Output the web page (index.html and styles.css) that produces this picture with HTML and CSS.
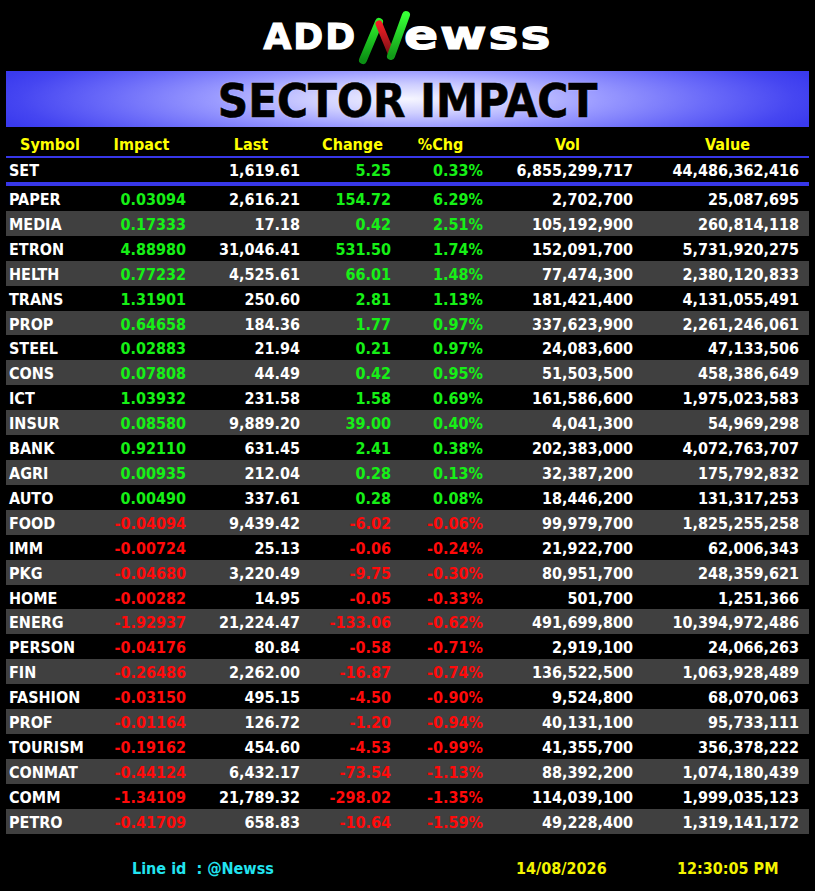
FILE: index.html
```html
<!DOCTYPE html>
<html lang="en">
<head>
<meta charset="utf-8">
<title>Sector Impact</title>
<link rel="stylesheet" href="styles.css">
</head>
<body>
<div class="page">
  <header class="logo">
    <span class="logo-add">ADD</span>
    <svg class="logo-mark" width="48" height="56" viewBox="0 0 48 56" aria-hidden="true">
      <defs>
        <linearGradient id="gL" x1="0" y1="1" x2="0" y2="0">
          <stop offset="0" stop-color="#0b8f14"/>
          <stop offset="1" stop-color="#2cf02c"/>
        </linearGradient>
        <linearGradient id="gR" x1="0" y1="1" x2="0" y2="0">
          <stop offset="0" stop-color="#129a18"/>
          <stop offset="1" stop-color="#36ff36"/>
        </linearGradient>
        <linearGradient id="rd" x1="0" y1="0" x2="0" y2="1">
          <stop offset="0" stop-color="#f21e24"/>
          <stop offset="1" stop-color="#7c1016"/>
        </linearGradient>
      </defs>
      <line x1="4" y1="50" x2="20" y2="12" stroke="url(#gL)" stroke-width="8" stroke-linecap="round"/>
      <line x1="20" y1="14" x2="32" y2="43" stroke="url(#rd)" stroke-width="7" stroke-linecap="round"/>
      <line x1="32" y1="46" x2="47" y2="5" stroke="url(#gR)" stroke-width="8" stroke-linecap="round"/>
    </svg>
    <span class="logo-ewss">ewss</span>
  </header>

  <div class="banner"><h1 class="banner-title">SECTOR IMPACT</h1></div>

  <section class="table">
    <div class="thead">
      <div>Symbol</div><div>Impact</div><div>Last</div><div>Change</div><div>%Chg</div><div>Vol</div><div>Value</div>
    </div>
    <div class="rule-thin"></div>
    <div class="row set"><div class="sym">SET</div><div></div><div>1,619.61</div><div class="up">5.25</div><div class="up">0.33%</div><div>6,855,299,717</div><div>44,486,362,416</div></div>
    <div class="rule-thick"></div>

    <div class="row"><div class="sym">PAPER</div><div class="up">0.03094</div><div>2,616.21</div><div class="up">154.72</div><div class="up">6.29%</div><div>2,702,700</div><div>25,087,695</div></div>
    <div class="row alt"><div class="sym">MEDIA</div><div class="up">0.17333</div><div>17.18</div><div class="up">0.42</div><div class="up">2.51%</div><div>105,192,900</div><div>260,814,118</div></div>
    <div class="row"><div class="sym">ETRON</div><div class="up">4.88980</div><div>31,046.41</div><div class="up">531.50</div><div class="up">1.74%</div><div>152,091,700</div><div>5,731,920,275</div></div>
    <div class="row alt"><div class="sym">HELTH</div><div class="up">0.77232</div><div>4,525.61</div><div class="up">66.01</div><div class="up">1.48%</div><div>77,474,300</div><div>2,380,120,833</div></div>
    <div class="row"><div class="sym">TRANS</div><div class="up">1.31901</div><div>250.60</div><div class="up">2.81</div><div class="up">1.13%</div><div>181,421,400</div><div>4,131,055,491</div></div>
    <div class="row alt"><div class="sym">PROP</div><div class="up">0.64658</div><div>184.36</div><div class="up">1.77</div><div class="up">0.97%</div><div>337,623,900</div><div>2,261,246,061</div></div>
    <div class="row"><div class="sym">STEEL</div><div class="up">0.02883</div><div>21.94</div><div class="up">0.21</div><div class="up">0.97%</div><div>24,083,600</div><div>47,133,506</div></div>
    <div class="row alt"><div class="sym">CONS</div><div class="up">0.07808</div><div>44.49</div><div class="up">0.42</div><div class="up">0.95%</div><div>51,503,500</div><div>458,386,649</div></div>
    <div class="row"><div class="sym">ICT</div><div class="up">1.03932</div><div>231.58</div><div class="up">1.58</div><div class="up">0.69%</div><div>161,586,600</div><div>1,975,023,583</div></div>
    <div class="row alt"><div class="sym">INSUR</div><div class="up">0.08580</div><div>9,889.20</div><div class="up">39.00</div><div class="up">0.40%</div><div>4,041,300</div><div>54,969,298</div></div>
    <div class="row"><div class="sym">BANK</div><div class="up">0.92110</div><div>631.45</div><div class="up">2.41</div><div class="up">0.38%</div><div>202,383,000</div><div>4,072,763,707</div></div>
    <div class="row alt"><div class="sym">AGRI</div><div class="up">0.00935</div><div>212.04</div><div class="up">0.28</div><div class="up">0.13%</div><div>32,387,200</div><div>175,792,832</div></div>
    <div class="row"><div class="sym">AUTO</div><div class="up">0.00490</div><div>337.61</div><div class="up">0.28</div><div class="up">0.08%</div><div>18,446,200</div><div>131,317,253</div></div>
    <div class="row alt"><div class="sym">FOOD</div><div class="dn">-0.04094</div><div>9,439.42</div><div class="dn">-6.02</div><div class="dn">-0.06%</div><div>99,979,700</div><div>1,825,255,258</div></div>
    <div class="row"><div class="sym">IMM</div><div class="dn">-0.00724</div><div>25.13</div><div class="dn">-0.06</div><div class="dn">-0.24%</div><div>21,922,700</div><div>62,006,343</div></div>
    <div class="row alt"><div class="sym">PKG</div><div class="dn">-0.04680</div><div>3,220.49</div><div class="dn">-9.75</div><div class="dn">-0.30%</div><div>80,951,700</div><div>248,359,621</div></div>
    <div class="row"><div class="sym">HOME</div><div class="dn">-0.00282</div><div>14.95</div><div class="dn">-0.05</div><div class="dn">-0.33%</div><div>501,700</div><div>1,251,366</div></div>
    <div class="row alt"><div class="sym">ENERG</div><div class="dn">-1.92937</div><div>21,224.47</div><div class="dn">-133.06</div><div class="dn">-0.62%</div><div>491,699,800</div><div>10,394,972,486</div></div>
    <div class="row"><div class="sym">PERSON</div><div class="dn">-0.04176</div><div>80.84</div><div class="dn">-0.58</div><div class="dn">-0.71%</div><div>2,919,100</div><div>24,066,263</div></div>
    <div class="row alt"><div class="sym">FIN</div><div class="dn">-0.26486</div><div>2,262.00</div><div class="dn">-16.87</div><div class="dn">-0.74%</div><div>136,522,500</div><div>1,063,928,489</div></div>
    <div class="row"><div class="sym">FASHION</div><div class="dn">-0.03150</div><div>495.15</div><div class="dn">-4.50</div><div class="dn">-0.90%</div><div>9,524,800</div><div>68,070,063</div></div>
    <div class="row alt"><div class="sym">PROF</div><div class="dn">-0.01164</div><div>126.72</div><div class="dn">-1.20</div><div class="dn">-0.94%</div><div>40,131,100</div><div>95,733,111</div></div>
    <div class="row"><div class="sym">TOURISM</div><div class="dn">-0.19162</div><div>454.60</div><div class="dn">-4.53</div><div class="dn">-0.99%</div><div>41,355,700</div><div>356,378,222</div></div>
    <div class="row alt"><div class="sym">CONMAT</div><div class="dn">-0.44124</div><div>6,432.17</div><div class="dn">-73.54</div><div class="dn">-1.13%</div><div>88,392,200</div><div>1,074,180,439</div></div>
    <div class="row"><div class="sym">COMM</div><div class="dn">-1.34109</div><div>21,789.32</div><div class="dn">-298.02</div><div class="dn">-1.35%</div><div>114,039,100</div><div>1,999,035,123</div></div>
    <div class="row alt"><div class="sym">PETRO</div><div class="dn">-0.41709</div><div>658.83</div><div class="dn">-10.64</div><div class="dn">-1.59%</div><div>49,228,400</div><div>1,319,141,172</div></div>
  </section>

  <footer class="footer">
    <div class="lineid">Line id&nbsp; : @Newss</div>
    <div class="date">14/08/2026</div>
    <div class="time">12:30:05 PM</div>
  </footer>
</div>
</body>
</html>
```

FILE: styles.css
```css
html, body {
  margin: 0;
  padding: 0;
  background: #000;
}

body {
  width: 815px;
  height: 891px;
  overflow: hidden;
  color: #fff;
  font-family: "DejaVu Sans Condensed", "DejaVu Sans", sans-serif;
  font-stretch: condensed;
  font-weight: bold;
}

.page {
  width: 815px;
}

/* Logo */
.logo {
  height: 71px;
  box-sizing: border-box;
  padding-top: 10px;
  display: flex;
  justify-content: center;
  align-items: flex-start;
}

.logo-add {
  display: block;
  width: 97px;
  height: 56px;
  font-family: "DejaVu Sans", sans-serif;
  font-stretch: normal;
  font-size: 36px;
  line-height: 53px;
  letter-spacing: 2px;
  white-space: nowrap;
  -webkit-text-stroke: 1.2px #fff;
}

.logo-mark {
  display: block;
  flex: none;
  margin-left: -2px;
  overflow: visible;
}

.logo-ewss {
  display: block;
  width: 148px;
  height: 56px;
  margin-left: -3px;
  font-family: "DejaVu Sans", sans-serif;
  font-stretch: normal;
  font-size: 40px;
  line-height: 50px;
  letter-spacing: 1.5px;
  white-space: nowrap;
  -webkit-text-stroke: 1.2px #fff;
  transform: scaleX(1.26);
  transform-origin: left center;
}

/* Banner */
.banner {
  margin: 0 6px;
  height: 56px;
  box-sizing: border-box;
  padding-top: 3px;
  display: flex;
  align-items: center;
  justify-content: center;
  background: radial-gradient(ellipse 430px 64px at 50% 50%,
    #f6f6ff 0%, #cfcfff 22%, #9a9aff 45%, #6a6af9 70%, #4646f1 90%, #3a3aee 100%);
}

.banner-title {
  margin: 0;
  color: #000;
  font-size: 47px;
  line-height: 53px;
  font-weight: bold;
  -webkit-text-stroke: 0.6px #000;
  text-shadow: 0 0 2px rgba(255, 255, 255, 0.55);
}

/* Table */
.table {
  margin: 0 6px;
  font-size: 16px;
}

.thead {
  display: grid;
  grid-template-columns: 88px 95px 124px 79px 97px 157px 163px;
  height: 29px;
  box-sizing: border-box;
  padding-top: 6px;
  line-height: 23px;
  color: #ffff00;
  text-align: center;
}

.rule-thin {
  height: 2px;
  background: #3737e8;
}

.rule-thick {
  height: 4px;
  background: #3737e8;
}

.row {
  display: grid;
  grid-template-columns: 94px 86px 114px 91px 92px 150px 166px 1fr;
  height: 24.92px;
  box-sizing: border-box;
  padding-top: 2px;
  line-height: 23px;
  text-align: right;
  white-space: nowrap;
}

.row.set {
  height: 24px;
  padding-top: 1px;
  line-height: 23px;
}

.row.alt {
  background: #404040;
}

.row .sym {
  text-align: left;
  padding-left: 3px;
}

.up {
  color: #16f016;
}

.dn {
  color: #ff0a0a;
}

/* Footer */
.footer {
  display: grid;
  grid-template-columns: 384px 161px auto;
  padding-left: 132px;
  padding-top: 25px;
  font-size: 16px;
  line-height: 20px;
}

.lineid {
  color: #22e4f0;
}

.date,
.time {
  color: #f4f400;
}
```
